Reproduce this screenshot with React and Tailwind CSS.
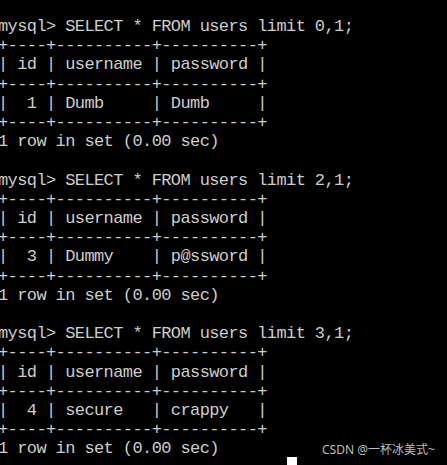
import React from 'react';

const queries = [
  { limit: '0,1', row: '|  1 | Dumb     | Dumb     |' },
  { limit: '2,1', row: '|  3 | Dummy    | p@ssword |' },
  { limit: '3,1', row: '|  4 | secure   | crappy   |' },
];

const sep = '+----+----------+----------+';

export default function App() {
  const lines = [];
  queries.forEach((q, i) => {
    lines.push(`mysql> SELECT * FROM users limit ${q.limit};`);
    lines.push(sep);
    lines.push('| id | username | password |');
    lines.push(sep);
    lines.push(q.row);
    lines.push(sep);
    lines.push('1 row in set (0.00 sec)');
    if (i < queries.length - 1) lines.push('');
  });

  return (
    <div className="relative w-[447px] h-[465px] bg-black overflow-hidden">
      <pre className="w-max pt-[17px] -ml-[2px] font-['Liberation_Mono',monospace] text-[17px] tracking-[-0.6px] leading-[19.2px] text-[#cdcdcd]">
        {lines.join('\n')}
      </pre>

      {/* cursor */}
      <div className="absolute left-[287px] top-[457px] w-[10px] h-[10px] bg-white" />

      {/* watermark */}
      <div className="absolute left-[322px] top-[441px] font-['Noto_Sans','Noto_Sans_CJK_SC',sans-serif] text-[12px] leading-[18px] text-[#bdbdbd]">
        CSDN @一杯冰美式~
      </div>
    </div>
  );
}
